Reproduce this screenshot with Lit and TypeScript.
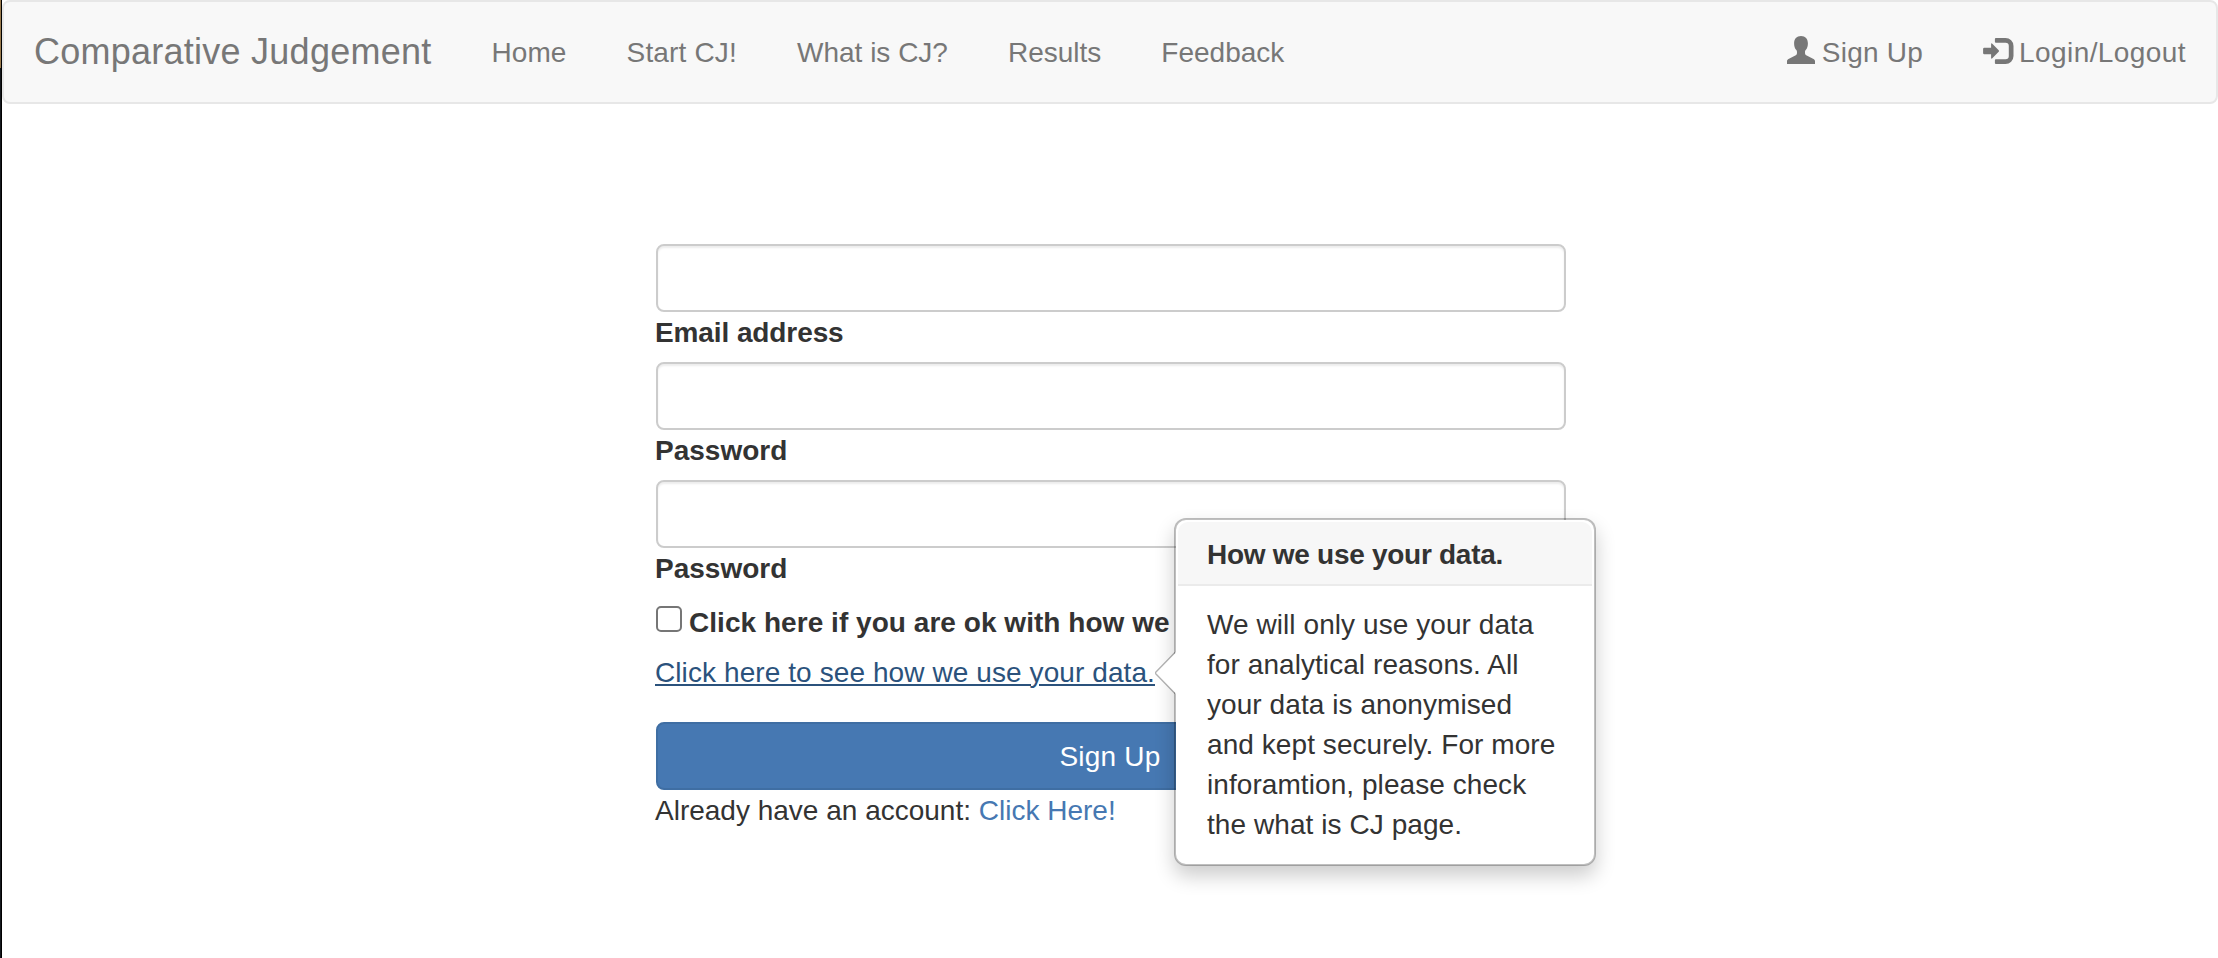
import { LitElement, html, css, svg } from 'lit';
import { customElement, state } from 'lit/decorators.js';

const userIcon = svg`<path d="M14 0C9.6 0 7.1 3 7.1 7.2c0 2.900.6 5 2.2 6.900.600.700.700 1.200.700 2.500 0 1.500-.2 2.300-1.700 3L2 22.700C.500 23.500 0 24.200 0 25.300V28H28v-2.700c0-1.100-.5-1.800-2-2.600l-6.300-3.100c-1.500-.7-1.700-1.500-1.700-3 0-1.300.1-1.800.7-2.500 1.600-1.900 2.200-4 2.200-6.900C20.900 3 18.400 0 14 0z"/>`;
const loginIcon = svg`<path d="M12.900 2H22.500A8 8 0 0 1 30.500 10V20A8 8 0 0 1 22.500 28H12.900A1 1 0 0 1 11.900 27V24.300A1 1 0 0 1 12.900 23.300H22.500A3.300 3.300 0 0 0 25.800 20V10A3.300 3.300 0 0 0 22.500 6.700H12.900A1 1 0 0 1 11.900 5.700V3A1 1 0 0 1 12.900 2Z"/><path d="M1.300 11.800H8.100V8.300Q8.100 6.700 9.300 7.700L15.700 14.300Q16.400 15 15.700 15.700L9.300 22.300Q8.100 23.300 8.100 21.700V18.200H1.300Q.1 18.200.1 17V13Q.1 11.800 1.300 11.800Z"/>`;

@customElement('cj-navbar')
export class CjNavbar extends LitElement {
  static styles = css`
    :host { display: block; }
    nav {
      display: flex; align-items: flex-start; height: 104px; box-sizing: border-box;
      padding: 31px 30px 0; border: 2px solid #e7e7e7; border-radius: 8px;
      background: #f8f8f8; line-height: 40px; color: #777;
    }
    a { color: inherit; text-decoration: none; white-space: nowrap; }
    .brand { font-size: 36px; line-height: 38px; letter-spacing: 0.25px; }
    .links, .account { display: flex; gap: 60px; }
    .links { padding-left: 60px; }
    .account { margin-left: auto; }
    .home { letter-spacing: 0.1px; }
    .start { letter-spacing: 0.17px; }
    .item { display: flex; gap: 7.3px; }
    .signup { letter-spacing: 0.22px; }
    .login { gap: 8px; letter-spacing: 0.42px; }
    svg { display: block; width: 28px; height: 28px; margin-top: 3px; overflow: visible; fill: currentColor; }
  `;
  render() {
    return html`
      <nav>
        <a class="brand" href="#">Comparative Judgement</a>
        <div class="links">
          <a class="home" href="#">Home</a>
          <a class="start" href="#">Start CJ!</a>
          <a href="#">What is CJ?</a>
          <a href="#">Results</a>
          <a href="#">Feedback</a>
        </div>
        <div class="account">
          <a class="item signup" href="#"><svg viewBox="0 0 28 28">${userIcon}</svg>Sign Up</a>
          <a class="item login" href="#"><svg viewBox="0 0 28 28">${loginIcon}</svg>Login/Logout</a>
        </div>
      </nav>`;
  }
}

@customElement('cj-popover')
export class CjPopover extends LitElement {
  static styles = css`
    :host {
      display: block; box-sizing: border-box; width: 422px; padding: 2px;
      background: #fff; background-clip: padding-box;
      border: 2px solid rgba(0, 0, 0, 0.25); border-radius: 12px;
      box-shadow: 0 10px 20px rgba(0, 0, 0, 0.2); color: #333;
    }
    h3 {
      box-sizing: border-box; height: 64px; margin: 0; padding: 17px 28px 0 29px;
      font-size: 28px; font-weight: bold; line-height: 32px; letter-spacing: -0.28px;
      background: #f7f7f7; border-bottom: 2px solid #ebebeb; border-radius: 10px 10px 0 0;
      white-space: nowrap;
    }
    .content { padding: 19px 0 17px 29px; line-height: 40px; letter-spacing: 0.07px; }
    .line { display: block; white-space: nowrap; }
    .arrow { position: absolute; left: -21px; top: 131px; width: 21px; height: 44px; }
    .arrow svg { display: block; }
  `;
  render() {
    const lines = ['We will only use your data', 'for analytical reasons. All', 'your data is anonymised', 'and kept securely. For more', 'inforamtion, please check', 'the what is CJ page.'];
    return html`
      <div class="arrow">
        <svg width="21" height="44" viewBox="0 0 21 44">
          <path d="M21 1 0 22 21 43z" fill="#fff"/>
          <path d="M20 1.500 0 22 20 42.500" fill="none" stroke="#000" stroke-opacity=".3" stroke-width="1.400"/>
        </svg>
      </div>
      <h3>How we use your data.</h3>
      <div class="content">${lines.map((l) => html`<span class="line">${l}</span>`)}</div>`;
  }
}

@customElement('app-root')
export class AppRoot extends LitElement {
  @state() private showPopover = true;

  static styles = css`
    :host {
      display: flex; height: 958px; overflow: hidden; background: #fff;
      font-family: "Liberation Sans", Arial, sans-serif; font-size: 28px; line-height: 40px; color: #333;
    }
    .edge { flex: none; box-sizing: border-box; width: 2px; border-right: 1px solid #000; background: linear-gradient(#9a7b4e 0 68px, #15181d 68px); }
    .page { flex: 1; min-width: 0; }
    form { width: 910px; margin: 140px 0 0 654px; }
    .field {
      display: block; box-sizing: border-box; width: 100%; height: 68px; margin: 0;
      border: 2px solid #ccc; border-radius: 8px; background: #fff; outline: none;
      box-shadow: inset 0 2px 2px rgba(0, 0, 0, 0.075); font: inherit; padding: 12px 24px;
    }
    .label { display: block; margin: 0 0 9px -1px; padding-top: 1px; font-weight: bold; }
    .email { letter-spacing: -0.1px; }
    .consent { display: flex; height: 40px; margin-top: 14px; font-weight: bold; white-space: nowrap; gap: 7px; letter-spacing: 0.04px; }
    .consent input {
      appearance: none; flex: none; box-sizing: border-box; width: 26px; height: 26px; margin: 3px 0 0;
      border: 2px solid #767676; border-radius: 5px; background: #fff;
    }
    .info { position: relative; width: fit-content; margin: 10px 0 0 -1px; white-space: nowrap; }
    .info a { color: #2b527c; text-decoration: underline; text-decoration-thickness: 2px; text-underline-offset: 2px; letter-spacing: 0.09px; }
    cj-popover { position: absolute; left: 519px; top: -135px; z-index: 1; white-space: normal; }
    .submit {
      display: block; box-sizing: border-box; width: 100%; height: 68px; margin: 29px 0 0; padding: 2px 2px 0 0;
      border: 2px solid #3f6ea3; border-radius: 8px; background: #4678b2; color: #fff;
      font: inherit; line-height: 40px; letter-spacing: 0.2px;
    }
    .existing { margin: 0 0 0 -1px; padding-top: 1px; }
    .existing a { color: #4678b2; text-decoration: none; }
  `;

  render() {
    return html`
      <div class="edge"></div>
      <div class="page">
        <cj-navbar></cj-navbar>
        <form @submit=${(e: Event) => e.preventDefault()}>
          <input class="field" type="email" id="email" />
          <label class="label email" for="email">Email address</label>
          <input class="field" type="password" id="password" />
          <label class="label" for="password">Password</label>
          <input class="field" type="password" id="confirm" />
          <label class="label" for="confirm">Password</label>
          <label class="consent"><input type="checkbox" />Click here if you are ok with how we</label>
          <div class="info">
            <a href="#" @click=${(e: Event) => { e.preventDefault(); this.showPopover = !this.showPopover; }}>Click here to see how we use your data.</a>
            ${this.showPopover ? html`<cj-popover></cj-popover>` : ''}
          </div>
          <button class="submit">Sign Up</button>
          <p class="existing">Already have an account: <a href="#">Click Here!</a></p>
        </form>
      </div>`;
  }
}
